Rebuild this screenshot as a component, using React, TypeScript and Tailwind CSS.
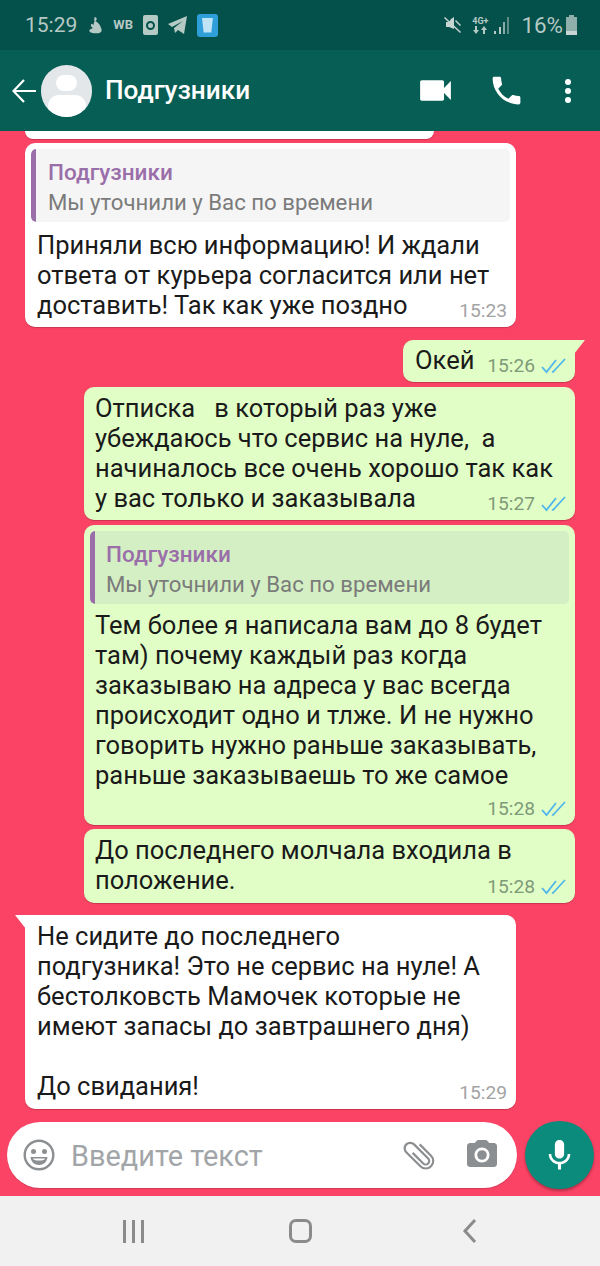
import React from 'react'

const font = "font-['Roboto',sans-serif]"

function Ticks() {
  return (
    <svg width="26" height="16" viewBox="0 0 26 16" fill="none" stroke="#4fb6ec" strokeWidth="1.8" className="ml-[6px]">
      <path d="M1 9l4.5 5L15 2" />
      <path d="M11 13.5l1 .5L24 1" />
    </svg>
  )
}

function Time({ time, out }: { time: string; out?: boolean }) {
  return (
    <div className={`absolute bottom-[5px] flex items-center text-[19.2px] leading-[22px] ${out ? 'right-[8px] text-[#7f9a79]' : 'right-[9px] text-[#a3a3a3]'}`}>
      <span>{time}</span>
      {out && <Ticks />}
    </div>
  )
}

function Quote({ out }: { out?: boolean }) {
  return (
    <div className={`h-[73px] rounded-[5px] flex overflow-hidden ${out ? 'bg-[#d3efc3]' : 'bg-[#f5f5f5]'}`}>
      <div className="w-[5px] bg-[#9a6ea9] rounded-l-[5px]" />
      <div className={`pt-[8px] ${out ? 'pl-[11px]' : 'pl-[12px]'}`}>
        <div className="text-[22.5px] leading-[30px] font-medium text-[#9a6ea9]">Подгузники</div>
        <div className="text-[22.2px] leading-[31px] text-[#7b7b7b]">Мы уточнили у Вас по времени</div>
      </div>
    </div>
  )
}

function Lines({ lines }: { lines: string[] }) {
  return (
    <>
      {lines.map((line, i) => (
        <div key={i} className="h-[30px] text-[25.5px] leading-[30px] text-[#1a1a1a] whitespace-pre">{line}</div>
      ))}
    </>
  )
}

function Bubble({ children, time, out, className }: { children: React.ReactNode; time: string; out?: boolean; className: string }) {
  return (
    <div className={`relative rounded-[10px] shadow-[0_1px_1px_rgba(0,0,0,0.2)] ${out ? 'bg-[#e1fec6]' : 'bg-white'} ${className}`}>
      {children}
      <Time time={time} out={out} />
    </div>
  )
}

function StatusLeft() {
  return (
    <div className="flex items-center">
      <svg width="17" height="21" viewBox="0 0 20 22" fill="#b5c9c5" className="ml-[10px]">
        <path d="M9 1c3 0 3 4 1 5 3 1 6 5 7 9 1 3-1 5-5 5H8c-4 0-6-2-5-4l4-2c-2-1-3-3-2-5 1 0 2 1 3 1 0-2 0-3 1-4-1-2 0-5 0-5z" />
      </svg>
      <span className="text-[13px] font-bold text-[#b5c9c5] ml-[9px]">WB</span>
      <div className="w-[15px] h-[20px] ml-[10px] rounded-[2px] bg-[#b5c9c5] flex items-center justify-center">
        <div className="w-[9px] h-[9px] rounded-full border-2 border-[#04504a]" />
      </div>
      <svg width="20" height="18" viewBox="0 0 20 18" fill="#b5c9c5" className="ml-[10px]">
        <path d="M0 8L19 0l-3 18-6-4-3 3-1-5 9-7-11 6z" />
      </svg>
      <div className="w-[21px] h-[23px] ml-[9px] rounded-[3px] bg-[#2e9fd8] flex items-center justify-center">
        <div className="w-[11px] h-[15px] bg-[#bfe4f5] [clip-path:polygon(0_0,100%_0,85%_100%,15%_100%)]" />
      </div>
    </div>
  )
}

function StatusRight() {
  return (
    <div className="flex items-center">
      <svg width="18" height="18" viewBox="0 0 18 18" fill="#c7d6d3">
        <path d="M7 3l3-2v12L5 11H2V6h3zM12 4l5 5-1 1-5-5z" />
        <path d="M1 1l16 15-1 1L0 2z" />
      </svg>
      <div className="ml-[9px] w-[18px] flex flex-col items-center text-[#b5c9c5]">
        <span className="text-[9px] font-bold leading-[10px]">4G+</span>
        <svg width="14" height="8" viewBox="0 0 14 8" fill="#b5c9c5"><path d="M2 0h2v4h2L3 8 0 4h2zM10 8h2V4h2l-3-4-3 4h2z" /></svg>
      </div>
      <svg width="16" height="17" viewBox="0 0 16 17" fill="#b5c9c5" className="ml-[5px]">
        <rect x="0" y="14" width="2" height="3" />
        <rect x="5" y="10" width="2" height="7" />
        <rect x="9" y="5" width="2" height="12" opacity=".75" />
        <rect x="13" y="0" width="2" height="17" opacity=".5" />
      </svg>
      <span className="ml-[11px] text-[22.4px] leading-[24px] text-[#b5c9c5]">16%</span>
      <div className="w-[11px] h-[20px] ml-[3px] flex flex-col items-center">
        <div className="w-[5px] h-[2px] bg-[#8fb0aa]" />
        <div className="w-[11px] flex-1 bg-[#8fb0aa] flex flex-col justify-end">
          <div className="h-[4px] bg-[#c7d6d3]" />
        </div>
      </div>
    </div>
  )
}

export default function App() {
  return (
    <div className={`w-[600px] h-[1266px] flex flex-col overflow-hidden ${font}`}>
      <div className="h-[50px] bg-[#04504a] flex items-center justify-between pl-[25px] pr-[23px] shrink-0">
        <div className="flex items-center">
          <span className="text-[21px] leading-[24px] text-[#b5c9c5]">15:29</span>
          <StatusLeft />
        </div>
        <StatusRight />
      </div>

      <div className="h-[81px] bg-[#075e55] flex items-center pl-[12px] shrink-0 z-10">
        <svg width="24" height="24" viewBox="0 0 24 24" fill="none" stroke="#ffffff" strokeWidth="2.2">
          <path d="M24 12H2M12 1L1.500 12 12 23" />
        </svg>
        <div className="w-[51px] h-[52px] ml-[5px] rounded-full bg-[#e4e7e9] overflow-hidden flex flex-col items-center">
          <div className="w-[21px] h-[23px] rounded-full bg-white mt-[10px]" />
          <div className="w-[38px] h-[30px] rounded-full bg-white mt-[4px]" />
        </div>
        <div className="ml-[13px] text-[26.2px] font-medium text-white">Подгузники</div>
        <div className="ml-auto flex items-center pr-[29px]">
          <svg width="41" height="41" viewBox="0 0 24 24" fill="#ffffff">
            <path d="M17 10.5V7c0-.55-.45-1-1-1H4c-.55 0-1 .45-1 1v10c0 .55.45 1 1 1h12c.55 0 1-.45 1-1v-3.5l4 4v-11l-4 4z" />
          </svg>
          <svg width="37" height="37" viewBox="0 0 24 24" fill="#ffffff" className="ml-[32px]">
            <path d="M6.62 10.79c1.44 2.83 3.76 5.14 6.59 6.59l2.2-2.2c.27-.27.67-.36 1.02-.24 1.12.37 2.33.57 3.57.57.55 0 1 .45 1 1V20c0 .55-.45 1-1 1-9.39 0-17-7.61-17-17 0-.55.45-1 1-1h3.5c.55 0 1 .45 1 1 0 1.25.2 2.45.57 3.57.11.35.03.74-.25 1.02l-2.2 2.2z" />
          </svg>
          <div className="ml-[40px] flex flex-col gap-[3px]">
            <div className="w-[6px] h-[6px] rounded-full bg-white" />
            <div className="w-[6px] h-[6px] rounded-full bg-white" />
            <div className="w-[6px] h-[6px] rounded-full bg-white" />
          </div>
        </div>
      </div>

      <div className="flex-1 bg-[#fb4365] flex flex-col overflow-hidden">
        <div className="w-[409px] h-[8px] ml-[25px] bg-white rounded-b-[10px] shadow-[0_1px_1px_rgba(0,0,0,0.2)] shrink-0" />

        <Bubble className="self-start ml-[25px] mt-[4px] w-[491px] h-[184px] p-[6px]" time="15:23">
          <Quote />
          <div className="mt-[8px] pl-[6px]">
            <Lines lines={['Приняли всю информацию! И ждали', 'ответа от курьера согласится или нет', 'доставить! Так как уже поздно']} />
          </div>
        </Bubble>

        <div className="relative self-end mr-[25px] mt-[13px] w-[172px] h-[42px]">
          <Bubble className="w-full h-full pl-[12px] pt-[5px] !rounded-tr-none" out time="15:26">
            <Lines lines={['Окей']} />
          </Bubble>
          <div className="absolute top-0 -right-[10px] w-[11px] h-[14px] bg-[#e1fec6] [clip-path:polygon(0_0,100%_0,0_100%)]" />
        </div>

        <Bubble className="self-end mr-[25px] mt-[5px] w-[491px] h-[133px] pl-[11px] pt-[6px]" out time="15:27">
          <Lines lines={['Отписка   в который раз уже', 'убеждаюсь что сервис на нуле,  а', 'начиналось все очень хорошо так как', 'у вас только и заказывала']} />
        </Bubble>

        <Bubble className="self-end mr-[25px] mt-[5px] w-[491px] h-[300px] p-[6px]" out time="15:28">
          <Quote out />
          <div className="mt-[6px] pl-[5px]">
            <Lines lines={['Тем более я написала вам до 8 будет', 'там) почему каждый раз когда', 'заказываю на адреса у вас всегда', 'происходит одно и тлже. И не нужно', 'говорить нужно раньше заказывать,', 'раньше заказываешь то же самое']} />
          </div>
        </Bubble>

        <Bubble className="self-end mr-[25px] mt-[4px] w-[491px] h-[74px] pl-[11px] pt-[6px]" out time="15:28">
          <Lines lines={['До последнего молчала входила в', 'положение.']} />
        </Bubble>

        <div className="relative self-start ml-[25px] mt-[12px] w-[491px] h-[194px]">
          <Bubble className="w-full h-full pl-[12px] pt-[6px] !rounded-tl-none" time="15:29">
            <Lines lines={['Не сидите до последнего', 'подгузника! Это не сервис на нуле! А', 'бестолковсть Мамочек которые не', 'имеют запасы до завтрашнего дня)', '', 'До свидания!']} />
          </Bubble>
          <div className="absolute top-0 -left-[10px] w-[11px] h-[14px] bg-white [clip-path:polygon(0_0,100%_0,100%_100%)]" />
        </div>

        <div className="mt-[12px] ml-[7px] flex items-center">
          <div className="w-[510px] h-[66px] bg-white rounded-full flex items-center pl-[16px] shadow-[0_1px_1px_rgba(0,0,0,0.15)]">
            <svg width="32" height="32" viewBox="0 0 32 32">
              <circle cx="16" cy="16" r="14.3" fill="none" stroke="#8c8f91" strokeWidth="2.4" />
              <circle cx="10.5" cy="12.5" r="2.5" fill="#8c8f91" />
              <circle cx="21.5" cy="12.5" r="2.5" fill="#8c8f91" />
              <path d="M7.5 18h17c-.5 5-4 8-8.500 8s-8-3-8.500-8z" fill="#8c8f91" />
              <path d="M10 19.500h12c-.5 1.500-2 2-6 2s-5.500-.5-6-2z" fill="#ffffff" />
            </svg>
            <span className="ml-[16px] text-[28.9px] leading-[34px] mt-[2px] text-[#a2a5a7]">Введите текст</span>
            <svg width="34" height="34" viewBox="0 0 34 34" fill="none" stroke="#8c8f91" strokeWidth="2.2" className="ml-auto">
              <g transform="rotate(-45 17 17)">
                <path d="M14 11v15a3.500 3.500 0 0 0 7 0V6a5.500 5.500 0 0 0-11 0v20a7.500 7.500 0 0 0 15 0V10" />
              </g>
            </svg>
            <svg width="36" height="36" viewBox="0 0 24 24" fill="#8c8f91" className="ml-[28px] mr-[17px]">
              <path d="M9 2L7.170 4H4c-1.100 0-2 .9-2 2v12c0 1.100.9 2 2 2h16c1.100 0 2-.9 2-2V6c0-1.100-.9-2-2-2h-3.170L15 2H9zm3 15c-2.760 0-5-2.240-5-5s2.240-5 5-5 5 2.240 5 5-2.240 5-5 5z" />
              <circle cx="12" cy="12" r="3.200" />
            </svg>
          </div>
          <div className="w-[69px] h-[68px] ml-[8px] rounded-full bg-[#0b8b7b] flex items-center justify-center shadow-[0_2px_3px_rgba(0,0,0,0.3)]">
            <svg width="37" height="37" viewBox="0 0 24 24" fill="#ffffff">
              <path d="M12 14c1.660 0 3-1.340 3-3V5c0-1.660-1.340-3-3-3S9 3.340 9 5v6c0 1.660 1.340 3 3 3zm5.300-3c0 3-2.540 5.100-5.300 5.100S6.700 14 6.700 11H5c0 3.410 2.720 6.230 6 6.720V21h2v-3.280c3.280-.48 6-3.300 6-6.720h-1.700z" />
            </svg>
          </div>
        </div>
      </div>

      <div className="h-[70px] bg-[#f1f1f1] shrink-0 flex items-center justify-center">
        <div className="flex items-center">
          <div className="flex gap-[6px]">
            <div className="w-[3px] h-[23px] bg-[#8b8b8b]" />
            <div className="w-[3px] h-[23px] bg-[#8b8b8b]" />
            <div className="w-[3px] h-[23px] bg-[#8b8b8b]" />
          </div>
          <div className="w-[23px] h-[24px] ml-[145px] rounded-[7px] border-[3px] border-[#8b8b8b]" />
          <svg width="16" height="26" viewBox="0 0 16 26" fill="none" stroke="#8b8b8b" strokeWidth="3" className="ml-[150px]">
            <path d="M13 2L3 13l10 11" />
          </svg>
        </div>
      </div>
    </div>
  )
}
